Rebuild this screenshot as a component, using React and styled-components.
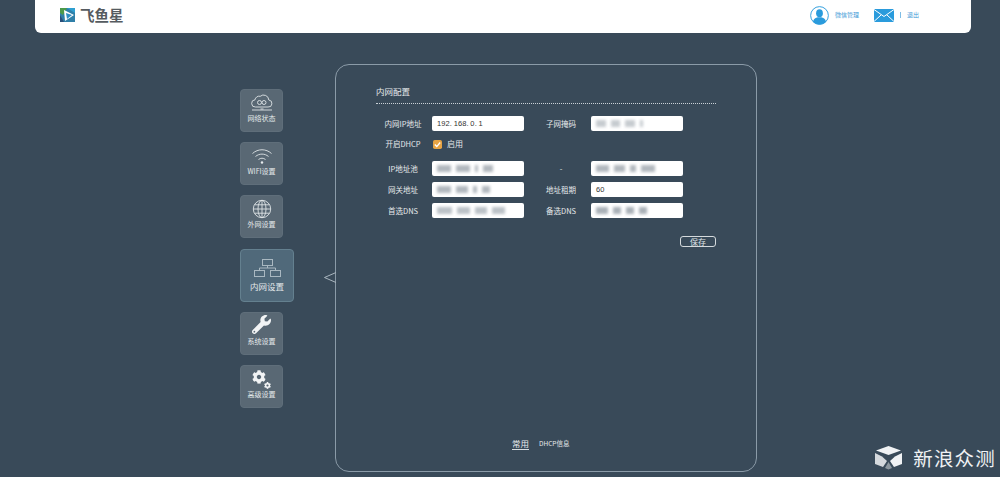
import React from "react";
import styled, { createGlobalStyle } from "styled-components";
import { FaWrench, FaCog } from "react-icons/fa";

const Global = createGlobalStyle`
  html, body { margin: 0; padding: 0; height: 100%; background: #394a59; overflow: hidden; }
  body { font-family: "Liberation Sans", "Noto Sans CJK SC", sans-serif; }
`;

const Page = styled.div`
  position: relative;
  width: 1000px;
  height: 477px;
  overflow: hidden;
  background: #394a59;
`;
const Header = styled.header`
  width: 936px;
  height: 33px;
  margin-left: 35px;
  padding: 0 52px 0 25px;
  box-sizing: border-box;
  background: #fff;
  border-radius: 0 0 6px 6px;
  display: flex;
  align-items: center;
  justify-content: space-between;
`;
const Brand = styled.div`
  display: flex;
  align-items: center;
  gap: 5px;
  margin-top: -3px;
  color: #555b60;
  font: 700 14.5px/1 "Noto Sans CJK SC", sans-serif;
`;
const UserBar = styled.div`
  display: flex;
  align-items: center;
  margin-top: -3px;
  color: #3f9ad6;
  font: 6px/1 "Noto Sans CJK SC", sans-serif;
`;
const UserName = styled.span`
  margin: 0 15px 0 6px;
`;
const Divider = styled.span`
  width: 1px;
  height: 6px;
  margin: 0 6px;
  background: #7fbde6;
`;
const Main = styled.main`
  display: flex;
  align-items: flex-start;
  padding: 31px 0 0 240px;
`;
const Side = styled.nav`
  display: flex;
  flex-direction: column;
  align-items: flex-start;
  gap: 10px;
  width: 95px;
  padding-top: 25px;
`;
const Tile = styled.div`
  width: ${(p) => (p.$active ? 54 : 43)}px;
  height: ${(p) => (p.$active ? 53 : 43)}px;
  margin-top: ${(p) => (p.$active ? 1 : 0)}px;
  box-sizing: border-box;
  border-radius: 4px;
  background: ${(p) => (p.$active ? "#50697a" : "#596874")};
  border: 1px solid ${(p) => (p.$active ? "#64808f" : "#5f6e7a")};
  color: #e4e8ea;
  display: flex;
  flex-direction: column;
  align-items: center;
  justify-content: flex-start;
  padding-top: ${(p) => (p.$active ? 6 : 3)}px;
  font: ${(p) => (p.$active ? 8.5 : 7)}px/1 "Noto Sans CJK SC", sans-serif;
`;
const TileIcon = styled.div`
  height: ${(p) => (p.$active ? 24 : 20)}px;
  margin-bottom: 2px;
  display: flex;
  align-items: center;
  justify-content: center;
`;
const Wrench = styled(FaWrench)`
  margin-top: -3px;
`;
const GearStack = styled.div`
  position: relative;
  width: 19px;
  height: 19px;
`;
const SmallGear = styled(FaCog)`
  position: absolute;
  right: 0;
  bottom: 0;
`;
const Panel = styled.section`
  position: relative;
  width: 422px;
  height: 408px;
  box-sizing: border-box;
  border: 1px solid #8b9ba8;
  border-radius: 14px;
  padding: 20px 40px 0;
  color: #e6e9eb;
  font: 8px/1 "Noto Sans CJK SC", sans-serif;
`;
const Pointer = styled.svg`
  position: absolute;
  left: -12px;
  top: 207px;
  width: 12px;
  height: 11px;
`;
const Title = styled.div`
  height: 18px;
  border-bottom: 1px dotted #c9d0d5;
  font-size: 8.5px;
  line-height: 12px;
`;
const Row = styled.div`
  display: flex;
  align-items: center;
  height: ${(p) => p.$h || 15}px;
  margin-top: ${(p) => p.$top || 0}px;
`;
const Label = styled.label`
  width: 54px;
  margin-right: 2px;
  text-align: center;
  font-size: 7.5px;
`;
const Label2 = styled(Label)`
  width: 74px;
  margin: 0 -7px 0 0;
`;
const Field = styled.div`
  width: 92px;
  height: 15px;
  box-sizing: border-box;
  background: #fff;
  border-radius: 2px;
  padding: 0 5px;
  display: flex;
  align-items: center;
  gap: 5px;
  color: #333;
  overflow: hidden;
  font: 7.5px/1 "Liberation Sans", sans-serif;
  word-spacing: -0.5px;
  letter-spacing: 0.1px;
`;
const Smudge = styled.i`
  display: block;
  width: ${(p) => p.$w}px;
  height: 7px;
  background: ${(p) => p.$c || "#a9b0b7"};
  filter: blur(1.5px);
`;
const Box = styled.span`
  width: 9px;
  height: 9px;
  margin-right: 5px;
  display: flex;
  align-items: center;
  justify-content: center;
`;
const Check = styled.div`
  display: flex;
  align-items: center;
  margin-left: 1px;
`;
const Actions = styled.div`
  display: flex;
  justify-content: flex-end;
  margin-top: 18px;
`;
const Save = styled.button`
  width: 36px;
  height: 11px;
  padding: 0;
  background: transparent;
  color: #dfe4e7;
  border: 1px solid #d5dadd;
  border-radius: 3px;
  font: 8px/1 "Noto Sans CJK SC", sans-serif;
`;
const Tabs = styled.div`
  position: absolute;
  left: 176px;
  top: 373px;
  display: flex;
  align-items: flex-start;
  gap: 10px;
`;
const Tab = styled.span`
  font-size: ${(p) => (p.$on ? 8.5 : 6.5)}px;
  line-height: 10px;
  padding-bottom: 1px;
  border-bottom: 1px solid ${(p) => (p.$on ? "#d6dce0" : "transparent")};
`;
const Mark = styled.div`
  position: absolute;
  right: 4px;
  bottom: 7px;
  display: flex;
  align-items: center;
  gap: 10px;
  color: #f0f2f4;
  font: 19.5px/1 "Noto Sans CJK SC", sans-serif;
  letter-spacing: 1.2px;
`;

const strokeProps = { fill: "none", stroke: "#dfe4e7", strokeWidth: 0.9 };

const smudges = (list, c) => list.map((w, i) => <Smudge key={i} $w={w} $c={c} />);

export default function App() {
  return (
    <Page>
      <Global />
      <Header>
        <Brand>
          <svg width="15" height="14" viewBox="0 0 15 14">
            <rect width="15" height="14" fill="#2f7fa8" />
            <path d="M0 0h7L3 7 0 5z" fill="#4c9a4a" />
            <path d="M7 0h8v5z" fill="#2e9fd0" />
            <path d="M0 7l4 7H0z" fill="#2a4f7a" />
            <path d="M4 2l10 5-9 6z" fill="#fff" />
            <path d="M6 5l6 2-5 4z" fill="#2d8fc4" />
          </svg>
          <span>飞鱼星</span>
        </Brand>
        <UserBar>
          <svg width="19" height="19" viewBox="0 0 18 18">
            <circle cx="9" cy="9" r="8.4" fill="#fff" stroke="#2a9bdc" strokeWidth="0.9" />
            <ellipse cx="9" cy="6.8" rx="3.2" ry="3.8" fill="#2a9bdc" />
            <path d="M2.8 15c.6-3.3 3-4 4.4-4.4h3.6c1.4.4 3.8 1.1 4.4 4.4-1.6 1.7-3.6 2.6-6.2 2.6S4.4 16.700 2.800 15z" fill="#2a9bdc" />
          </svg>
          <UserName>微信管理</UserName>
          <svg width="20" height="13" viewBox="0 0 20 13">
            <rect width="20" height="13" fill="#2a9bdc" />
            <path d="M0 .5l10 7 10-7M0 12.500l7-6.500M20 12.500l-7-6.500" fill="none" stroke="#fff" strokeWidth="1" />
          </svg>
          <Divider />
          <span>退出</span>
        </UserBar>
      </Header>
      <Main>
        <Side>
          <Tile>
            <TileIcon>
              <svg width="22" height="20" viewBox="0 0 22 20" {...strokeProps}>
                <path d="M4.500 14a3.600 3.600 0 0 1 -.5-7.200 4.200 4.200 0 0 1 5.200-3.500 5.200 5.200 0 0 1 8.600 3.700 3.500 3.500 0 0 1 -.8 7z" />
                <circle cx="8.500" cy="9.500" r="2" />
                <circle cx="13" cy="9.500" r="2" />
                <path d="M1 17h20M9.500 16h3" />
              </svg>
            </TileIcon>
            网络状态
          </Tile>
          <Tile>
            <TileIcon>
              <svg width="22" height="18" viewBox="0 0 22 18" {...strokeProps}>
                <path d="M1.500 6.500C7 1.500 15 1.500 20.500 6.500M4.500 9.500c3.800-3.200 9.200-3.200 13 0M7.500 12.500c2.200-1.700 4.800-1.700 7 0" />
                <circle cx="11" cy="15.500" r="1.200" fill="#e8ecee" stroke="none" />
              </svg>
            </TileIcon>
            WIFI设置
          </Tile>
          <Tile>
            <TileIcon>
              <svg width="20" height="20" viewBox="0 0 20 20" {...strokeProps}>
                <circle cx="10" cy="10" r="8.700" />
                <ellipse cx="10" cy="10" rx="4" ry="8.700" />
                <path d="M10 1.300v17.400M1.300 10h17.400M2.500 5.800h15M2.500 14.200h15" />
              </svg>
            </TileIcon>
            外网设置
          </Tile>
          <Tile $active>
            <TileIcon $active>
              <svg width="27" height="18" viewBox="0 0 27 18" fill="none" stroke="#a9b8c1" strokeWidth="1">
                <rect x="8.500" y="0.500" width="10" height="6" />
                <rect x="0.500" y="11.500" width="10" height="6" />
                <rect x="16.500" y="11.500" width="10" height="6" />
                <path d="M13.500 6.500v2.500M5.500 11.500v-2.500h16v2.500" />
              </svg>
            </TileIcon>
            内网设置
          </Tile>
          <Tile>
            <TileIcon>
              <Wrench size={19} color="#f2f4f5" />
            </TileIcon>
            系统设置
          </Tile>
          <Tile>
            <TileIcon>
              <GearStack>
                <FaCog size={14} color="#f2f4f5" />
                <SmallGear size={7} color="#f2f4f5" />
              </GearStack>
            </TileIcon>
            高级设置
          </Tile>
        </Side>
        <Panel>
          <Pointer viewBox="0 0 12 11">
            <path d="M12 0.500L.5 5.500 12 10.500" fill="none" stroke="#aab6bf" strokeWidth="1" />
          </Pointer>
          <Title>内网配置</Title>
          <Row $top={12}>
            <Label>内网IP地址</Label>
            <Field>192. 168. 0. 1</Field>
            <Label2>子网掩码</Label2>
            <Field>{smudges([10, 9, 10, 3], "#c6cbd0")}</Field>
          </Row>
          <Row $top={6} $h={14}>
            <Label>开启DHCP</Label>
            <Check>
              <Box>
                <svg width="9" height="9" viewBox="0 0 10 10">
                  <rect width="10" height="10" rx="2" fill="#e8a444" />
                  <path d="M2 5l2.200 2.300L8 2.800" fill="none" stroke="#fff" strokeWidth="1.500" />
                </svg>
              </Box>
              启用
            </Check>
          </Row>
          <Row $top={10}>
            <Label>IP地址池</Label>
            <Field>{smudges([14, 14, 3, 10], "#b2b8be")}</Field>
            <Label2>-</Label2>
            <Field>{smudges([13, 11, 6, 14], "#b2b8be")}</Field>
          </Row>
          <Row $top={6}>
            <Label>网关地址</Label>
            <Field>{smudges([14, 12, 4, 8], "#b2b8be")}</Field>
            <Label2>地址租期</Label2>
            <Field>60</Field>
          </Row>
          <Row $top={6}>
            <Label>首选DNS</Label>
            <Field>{smudges([15, 13, 12, 13], "#bcc2c7")}</Field>
            <Label2>备选DNS</Label2>
            <Field>{smudges([12, 8, 8, 8], "#a9b0b7")}</Field>
          </Row>
          <Actions>
            <Save>保存</Save>
          </Actions>
          <Tabs>
            <Tab $on>常用</Tab>
            <Tab>DHCP信息</Tab>
          </Tabs>
        </Panel>
      </Main>
      <Mark>
        <svg width="29" height="25" viewBox="0 0 29 25">
          <path d="M14.500 1L27 5.500 14.500 10 2 5.500z" fill="#f0f2f4" />
          <path d="M1 8l7 3.500 5 4.500-4 6-8 -3z" fill="#d5d9dd" />
          <path d="M28 8l-7 3.500-5 4.500 4 6 8-3z" fill="#f0f2f4" />
          <path d="M14.500 17l3.500 6-3.500 1.500-3.500-1.500z" fill="#8d979f" />
        </svg>
        <span>新浪众测</span>
      </Mark>
    </Page>
  );
}
